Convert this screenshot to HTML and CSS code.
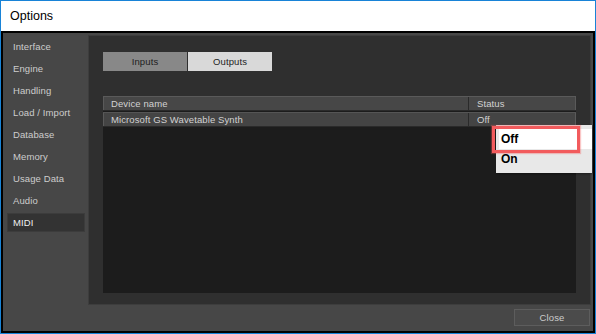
FILE: index.html
```html
<!DOCTYPE html>
<html>
<head>
<meta charset="utf-8">
<link rel="stylesheet" href="styles.css">
</head>
<body>
<div class="window">
  <div class="titlebar">Options</div>
  <div class="client">
    <ul class="sidebar">
      <li class="nav-item">Interface</li>
      <li class="nav-item">Engine</li>
      <li class="nav-item">Handling</li>
      <li class="nav-item">Load / Import</li>
      <li class="nav-item">Database</li>
      <li class="nav-item">Memory</li>
      <li class="nav-item">Usage Data</li>
      <li class="nav-item">Audio</li>
      <li class="nav-item active">MIDI</li>
    </ul>
    <div class="main">
      <div class="panel">
        <div class="tabs">
          <div class="tab">Inputs</div>
          <div class="tab selected">Outputs</div>
        </div>
        <div class="table">
          <div class="thead">
            <div class="cell c-name">Device name</div>
            <div class="cell c-status">Status</div>
          </div>
          <div class="trow">
            <div class="cell c-name">Microsoft GS Wavetable Synth</div>
            <div class="cell c-status">Off</div>
          </div>
        </div>
      </div>
      <div class="footer">
        <div class="btn">Close</div>
      </div>
    </div>
  </div>
  <div class="popup">
    <div class="opt hl">Off</div>
    <div class="opt">On</div>
  </div>
  <div class="mark"></div>
</div>
</body>
</html>
```
FILE: styles.css
```css
* { box-sizing: border-box; }
html, body { margin: 0; padding: 0; }
body { width: 596px; height: 334px; overflow: hidden; background: #fff; }

.window {
  position: relative;
  width: 596px;
  height: 334px;
  border: 1px solid #1883d7;
  display: flex;
  flex-direction: column;
}

.titlebar {
  height: 30px;
  background: #fff;
  padding-left: 9px;
  display: flex;
  align-items: center;
  font-family: "Liberation Sans", Arial, sans-serif;
  font-size: 12.5px;
  color: #000;
}

.client {
  flex: 1;
  border: 2px solid #000;
  background: #474747;
  display: flex;
  font-family: "Liberation Sans", Arial, sans-serif;
  font-size: 9.5px;
  letter-spacing: 0.1px;
  color: #cdcdcd;
}

.sidebar {
  list-style: none;
  margin: 0;
  padding: 4px 3px 0 4px;
  width: 85px;
  display: flex;
  flex-direction: column;
  gap: 3px;
}

.nav-item {
  height: 19px;
  line-height: 19px;
  padding-left: 6px;
  white-space: nowrap;
}

.nav-item.active {
  background: #333333;
  border: 1px solid #3c3c3c;
  line-height: 17px;
  padding-left: 5px;
  color: #eeeeee;
}

.main {
  flex: 1;
  display: flex;
  flex-direction: column;
  padding: 2px 2px 0 0;
}

.panel {
  flex: 1;
  background: #2f2f2f;
  border: 1px solid #3d3d3d;
  padding: 16px 14px 11px 14px;
  display: flex;
  flex-direction: column;
}

.tabs {
  display: flex;
  gap: 1px;
  height: 19px;
}

.tab {
  width: 84px;
  background: #888888;
  color: #1e1e1e;
  display: flex;
  align-items: center;
  justify-content: center;
}

.tab.selected { background: #d9d9d9; }

.table {
  flex: 1;
  margin-top: 25px;
  background: #1c1c1c;
  display: flex;
  flex-direction: column;
}

.thead, .trow {
  display: flex;
}

.thead {
  height: 15px;
  background: #474747;
  border-top: 1px solid #5a5a5a;
  border-bottom: 1px solid #2a2a2a;
}

.trow {
  height: 15px;
  margin-top: 1px;
  background: #444444;
  border-top: 1px solid #555555;
  border-bottom: 1px solid #2a2a2a;
}

.cell {
  display: flex;
  align-items: center;
  padding-left: 7px;
  white-space: nowrap;
  color: #d2d2d2;
}

.c-name { width: 365px; border-left: 1px solid #5a5a5a; }
.c-status { flex: 1; border-left: 1px solid #2a2a2a; padding-left: 8px; border-right: 1px solid #5a5a5a; }

.footer {
  height: 26px;
  display: flex;
  justify-content: flex-end;
  align-items: flex-start;
  padding: 4px 1px 0 0;
}

.btn {
  width: 76px;
  height: 17px;
  background: #4b4b4b;
  border: 1px solid #5d5d5d;
  display: flex;
  align-items: center;
  justify-content: center;
  color: #cccccc;
}

.popup {
  position: absolute;
  left: 495px;
  top: 124px;
  width: 96px;
  height: 48px;
  background: #e8e8e8;
  padding: 4px 0 0 3px;
  box-shadow: 1px 1px 2px rgba(0,0,0,0.35);
  font-family: "Liberation Sans", Arial, sans-serif;
  font-size: 12px;
  font-weight: bold;
  color: #000;
}

.opt {
  height: 19px;
  display: flex;
  align-items: center;
  padding-left: 2px;
}

.opt.hl {
  height: 20px;
  background: #ffffff;
}

.mark {
  position: absolute;
  left: 491px;
  top: 125px;
  width: 88px;
  height: 27px;
  border: 3px solid #f25b5d;
  box-shadow: 0 0 1px 1px rgba(242,91,93,0.35);
}
```
